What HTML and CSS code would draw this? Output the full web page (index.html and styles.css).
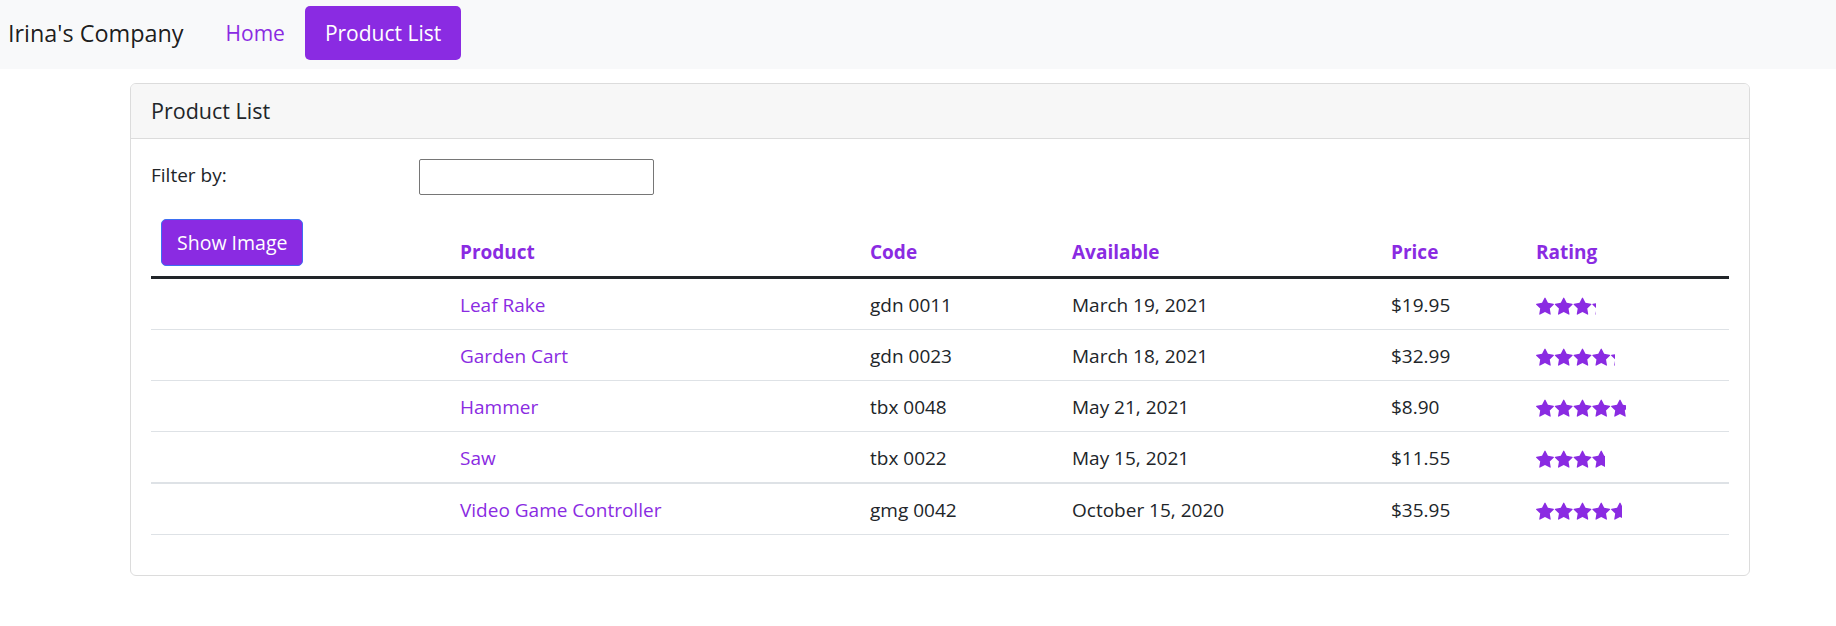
FILE: index.html
```html
<!DOCTYPE html>
<html lang="en">
<head>
<meta charset="utf-8">
<title>Product List</title>
<link rel="stylesheet" href="styles.css">
</head>
<body>
<svg width="0" height="0" class="defs" aria-hidden="true">
  <defs>
    <path id="star" d="M1664 615q0 22-26 48l-363 354 86 500q1 7 1 20 0 21-10.5 35.5T1321 1587q-19 0-40-12l-449-236-449 236q-22 12-40 12-21 0-31.5-14.5T301 1537q0-6 2-20l86-500L25 663Q0 636 0 615q0-37 56-46l502-73L783 41q19-41 49-41t49 41l225 455 502 73q56 9 56 46z"/>
  </defs>
</svg>
<nav class="navbar">
  <span class="brand">Irina's Company</span>
  <a class="nav-link" href="#">Home</a>
  <a class="nav-link active" href="#">Product List</a>
</nav>

<div class="card">
  <div class="card-header">Product List</div>
  <div class="card-body">
    <div class="filter-row">
      <div class="filter-label">Filter by:</div>
      <input class="filter-input" type="text">
    </div>
    <table class="table">
      <colgroup>
        <col class="c-img"><col class="c-prod"><col class="c-code"><col class="c-avail"><col class="c-price"><col class="c-rate">
      </colgroup>
      <thead>
        <tr>
          <th><button class="btn">Show Image</button></th>
          <th>Product</th>
          <th>Code</th>
          <th>Available</th>
          <th>Price</th>
          <th>Rating</th>
        </tr>
      </thead>
      <tbody>
        <tr>
          <td></td>
          <td><a href="#">Leaf Rake</a></td>
          <td>gdn 0011</td>
          <td>March 19, 2021</td>
          <td>$19.95</td>
          <td><span class="stars" style="width:60px"><svg class="star-row" viewBox="0 0 94 18" width="94" height="18"><use href="#star" transform="translate(0 0.5) scale(0.0108)"/><use href="#star" transform="translate(18.75 0.5) scale(0.0108)"/><use href="#star" transform="translate(37.5 0.5) scale(0.0108)"/><use href="#star" transform="translate(56.25 0.5) scale(0.0108)"/><use href="#star" transform="translate(75 0.5) scale(0.0108)"/></svg></span></td>
        </tr>
        <tr>
          <td></td>
          <td><a href="#">Garden Cart</a></td>
          <td>gdn 0023</td>
          <td>March 18, 2021</td>
          <td>$32.99</td>
          <td><span class="stars" style="width:78.75px"><svg class="star-row" viewBox="0 0 94 18" width="94" height="18"><use href="#star" transform="translate(0 0.5) scale(0.0108)"/><use href="#star" transform="translate(18.75 0.5) scale(0.0108)"/><use href="#star" transform="translate(37.5 0.5) scale(0.0108)"/><use href="#star" transform="translate(56.25 0.5) scale(0.0108)"/><use href="#star" transform="translate(75 0.5) scale(0.0108)"/></svg></span></td>
        </tr>
        <tr>
          <td></td>
          <td><a href="#">Hammer</a></td>
          <td>tbx 0048</td>
          <td>May 21, 2021</td>
          <td>$8.90</td>
          <td><span class="stars" style="width:90px"><svg class="star-row" viewBox="0 0 94 18" width="94" height="18"><use href="#star" transform="translate(0 0.5) scale(0.0108)"/><use href="#star" transform="translate(18.75 0.5) scale(0.0108)"/><use href="#star" transform="translate(37.5 0.5) scale(0.0108)"/><use href="#star" transform="translate(56.25 0.5) scale(0.0108)"/><use href="#star" transform="translate(75 0.5) scale(0.0108)"/></svg></span></td>
        </tr>
        <tr class="thick">
          <td></td>
          <td><a href="#">Saw</a></td>
          <td>tbx 0022</td>
          <td>May 15, 2021</td>
          <td>$11.55</td>
          <td><span class="stars" style="width:69.4px"><svg class="star-row" viewBox="0 0 94 18" width="94" height="18"><use href="#star" transform="translate(0 0.5) scale(0.0108)"/><use href="#star" transform="translate(18.75 0.5) scale(0.0108)"/><use href="#star" transform="translate(37.5 0.5) scale(0.0108)"/><use href="#star" transform="translate(56.25 0.5) scale(0.0108)"/><use href="#star" transform="translate(75 0.5) scale(0.0108)"/></svg></span></td>
        </tr>
        <tr>
          <td></td>
          <td><a href="#">Video Game Controller</a></td>
          <td>gmg 0042</td>
          <td>October 15, 2020</td>
          <td>$35.95</td>
          <td><span class="stars" style="width:86.25px"><svg class="star-row" viewBox="0 0 94 18" width="94" height="18"><use href="#star" transform="translate(0 0.5) scale(0.0108)"/><use href="#star" transform="translate(18.75 0.5) scale(0.0108)"/><use href="#star" transform="translate(37.5 0.5) scale(0.0108)"/><use href="#star" transform="translate(56.25 0.5) scale(0.0108)"/><use href="#star" transform="translate(75 0.5) scale(0.0108)"/></svg></span></td>
        </tr>
      </tbody>
    </table>
  </div>
</div>
</body>
</html>
```

FILE: styles.css
```css
* { box-sizing: border-box; }

html, body {
  margin: 0;
  padding: 0;
  background: #fff;
}

body {
  font-family: "Open Sans", "Noto Sans", "Liberation Sans", sans-serif;
  font-size: 19px;
  line-height: 30px;
  color: #212529;
}

.defs { position: absolute; width: 0; height: 0; overflow: hidden; }

a { color: #8a2be2; text-decoration: none; }

.navbar {
  display: flex;
  align-items: center;
  height: 69px;
  padding: 0 0 3px 8px;
  background: #f8f9fa;
}

.brand {
  font-size: 23.4px;
  line-height: 37px;
  color: rgba(0, 0, 0, 0.9);
  margin-right: 22px;
}

.nav-link {
  display: block;
  padding: 12px 20px;
  font-size: 21px;
  line-height: 30px;
  border-radius: 5px;
  color: #8a2be2;
}

.nav-link.active {
  background: #8a2be2;
  color: #fff;
}

.card {
  margin: 14px 0 0 130px;
  width: 1620px;
  border: 1px solid #dcdcdc;
  border-radius: 6px;
  overflow: hidden;
}

.card-header {
  padding: 12px 20px;
  font-size: 21.5px;
  background: #f7f7f7;
  border-bottom: 1px solid #dcdcdc;
}

.card-body {
  padding: 20px;
}

.filter-row {
  display: flex;
  align-items: flex-start;
  margin-bottom: 14px;
}

.filter-label {
  width: 268px;
  flex: none;
  margin-top: 1px;
}

.filter-input {
  width: 235px;
  height: 36px;
  border: 1px solid #767676;
  border-radius: 2px;
  margin: 0;
  padding: 1px 2px;
  font: inherit;
  background: #fff;
}

.table {
  width: 100%;
  table-layout: fixed;
  border-collapse: collapse;
  margin-bottom: 20px;
}

.c-img { width: 299px; }
.c-prod { width: 410px; }
.c-code { width: 202px; }
.c-avail { width: 319px; }
.c-price { width: 145px; }
.c-rate { width: 203px; }

.table th,
.table td {
  padding: 10px;
  text-align: left;
}

.table th {
  vertical-align: bottom;
  font-weight: 700;
  color: #8a2be2;
  border-bottom: 3px solid #212529;
  padding-bottom: 9px;
}

.table td {
  vertical-align: middle;
  padding: 11px 10px 9px;
  border-bottom: 1px solid #dee2e6;
}

.table tr.thick td {
  border-bottom-width: 2px;
}

.btn {
  display: inline-block;
  font: inherit;
  font-size: 19.5px;
  font-weight: 400;
  line-height: 30px;
  color: #fff;
  background: #8a2be2;
  border: 1px solid #3d6ff2;
  border-radius: 5px;
  padding: 7.5px 15px;
  margin-bottom: 1px;
  vertical-align: middle;
}

.stars {
  display: inline-block;
  height: 18px;
  overflow: hidden;
  vertical-align: middle;
  line-height: 0;
  position: relative;
  top: -1px;
}

.star-row {
  fill: #8a2be2;
  display: block;
}
```
